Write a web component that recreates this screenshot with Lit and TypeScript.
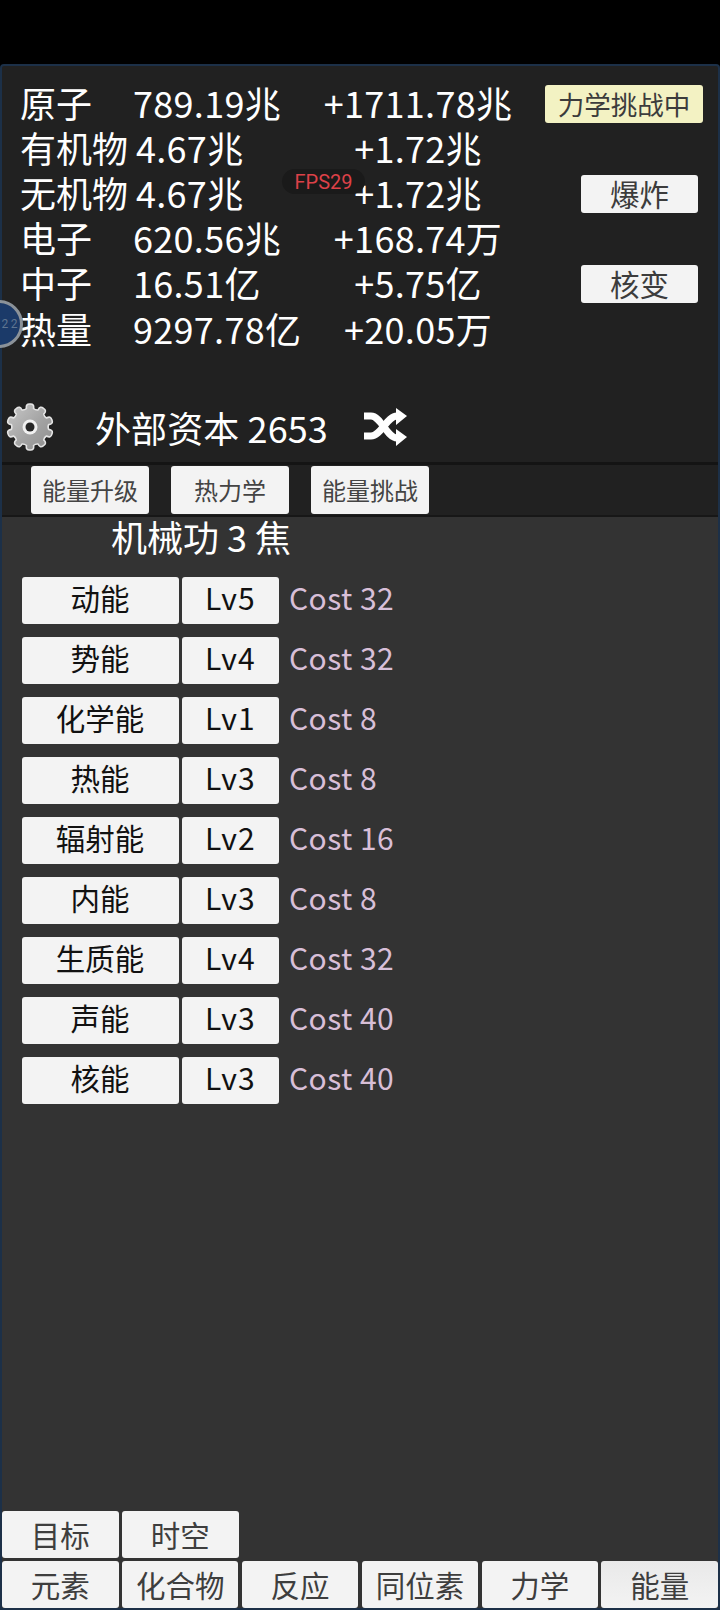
import { LitElement, html, css, svg } from "lit";
import { customElement } from "lit/decorators.js";

const rows = [
  { n: "原子", v: "789.19兆", g: "+1711.78兆", a: "力学挑战中", cls: "warn" },
  { n: "有机物", v: "4.67兆", g: "+1.72兆", wide: true },
  { n: "无机物", v: "4.67兆", g: "+1.72兆", a: "爆炸", cls: "", wide: true },
  { n: "电子", v: "620.56兆", g: "+168.74万" },
  { n: "中子", v: "16.51亿", g: "+5.75亿", a: "核变", cls: "" },
  { n: "热量", v: "9297.78亿", g: "+20.05万" },
];
const items = [
  ["动能", "Lv5", "Cost 32"],
  ["势能", "Lv4", "Cost 32"],
  ["化学能", "Lv1", "Cost 8"],
  ["热能", "Lv3", "Cost 8"],
  ["辐射能", "Lv2", "Cost 16"],
  ["内能", "Lv3", "Cost 8"],
  ["生质能", "Lv4", "Cost 32"],
  ["声能", "Lv3", "Cost 40"],
  ["核能", "Lv3", "Cost 40"],
];

function gearPath(): string {
  const teeth = 10;
  const cx = 24, cy = 24, ro = 23, ri = 18.8;
  const pt = (r: number, a: number) =>
    `${(cx + r * Math.cos(a)).toFixed(2)} ${(cy + r * Math.sin(a)).toFixed(2)}`;
  const step = (Math.PI * 2) / teeth;
  let d = "";
  for (let i = 0; i < teeth; i++) {
    const a = i * step - Math.PI / 2;
    const w = step * 0.3;
    d += `${i === 0 ? "M" : "L"}${pt(ri, a - w)} Q${pt(ro + 0.8, a - w)} ${pt(ro, a)} Q${pt(ro + 0.8, a + w)} ${pt(ri, a + w)} Q${pt(ri - 1.2, a + step / 2)} `;
    d += `${pt(ri, a + step - w)} `;
  }
  return d + "Z";
}

@customElement("app-root")
export class AppRoot extends LitElement {
  static styles = css`
    :host {
      display: block;
      width: 720px;
      height: 1610px;
      background: #000;
      font-family: "Noto Sans CJK SC", "Noto Sans", sans-serif;
      position: relative;
      overflow: hidden;
    }
    .screen {
      height: 1610px;
      box-sizing: border-box;
      padding-top: 64px;
      display: flex;
      flex-direction: column;
    }
    .panel {
      flex: 1;
      display: flex;
      flex-direction: column;
      min-height: 0;
      border: 2px solid #1c3048;
      border-radius: 4px 4px 0 0;
      background: #212121;
    }
    .stats {
      padding: 14px 15px 0 18px;
      color: #fff;
      height: 325px;
      box-sizing: border-box;
    }
    .stat {
      display: grid;
      grid-template-columns: 113px 166px 238px 1fr;
      height: 45.1px;
      align-items: center;
      font-size: 36px;
      line-height: 45px;
      white-space: nowrap;
    }
    .val, .gain { letter-spacing: 0.3px; }
    .val.wide { padding-left: 3px; }
    .gain { text-align: center; }
    .act { justify-self: end; margin: 2px 5px 0 0; }
    .act.warn { margin-right: 0; }
    .btn {
      display: flex;
      align-items: center;
      justify-content: center;
      box-sizing: border-box;
      background: #f3f3f3;
      border-radius: 3px;
      color: #3c3c3c;
      white-space: nowrap;
    }
    .act .btn {
      width: 117px;
      height: 38px;
      font-size: 29.5px;
    }
    .act.warn .btn {
      width: 158px;
      background: #f3f2c3;
      font-size: 26.5px;
    }
    .capital {
      height: 74px;
      display: flex;
      align-items: center;
      color: #fff;
      font-size: 36px;
      padding-left: 4px;
      padding-top: 1px;
      box-sizing: border-box;
      border-bottom: 3px solid #141414;
    }
    .gear { width: 48px; height: 48px; flex: none; }
    .capital span {
      margin-left: 41px;
      width: 268px;
      white-space: nowrap;
      letter-spacing: 0.1px;
    }
    .shuffle { width: 44px; height: 38px; flex: none; }
    .subtabs {
      display: flex;
      gap: 22px;
      padding: 1px 0 0 29px;
      height: 50px;
      box-sizing: border-box;
    }
    .subtabs .btn {
      width: 118px;
      height: 48px;
      padding-bottom: 2px;
      font-size: 24px;
      color: #444;
    }
    .main {
      flex: 1;
      display: flex;
      flex-direction: column;
      min-height: 0;
      background: #333;
      border-top: 2px solid #171717;
    }
    .title {
      color: #fff;
      font-size: 36px;
      line-height: 38px;
      padding-left: 109px;
      margin-bottom: 22px;
      white-space: nowrap;
    }
    .list {
      flex: 1;
      display: flex;
      flex-direction: column;
      gap: 13px;
      padding-left: 19.5px;
    }
    .item {
      display: flex;
      align-items: center;
      height: 47px;
    }
    .item .btn {
      height: 47px;
      padding-bottom: 7px;
      font-size: 29.5px;
      color: #111;
    }
    .item .name { width: 157px; }
    .item .lv {
      width: 97px;
      margin-left: 3.5px;
      font-size: 30px;
      letter-spacing: 1.2px;
    }
    .cost {
      color: #d8bfd8;
      font-size: 30px;
      letter-spacing: 0.45px;
      margin: 0 0 7px 10px;
      white-space: nowrap;
    }
    .nav {
      display: flex;
      flex-direction: column;
      gap: 3px;
    }
    .navrow { display: flex; gap: 3.33px; }
    .navrow .btn {
      width: 116.67px;
      height: 47px;
      padding-bottom: 2px;
      font-size: 29.5px;
      color: #3e3e3e;
    }
    .navrow .btn.on { background: linear-gradient(#e9e9e9, #f3f3f3); }
    .ball {
      position: absolute;
      left: -25px;
      top: 300px;
      width: 48px;
      height: 48px;
      box-sizing: border-box;
      border: 3px solid #8b9299;
      border-radius: 50%;
      background: #1b3a69;
      color: #5f7590;
      font-family: "Roboto", sans-serif;
      font-size: 12px;
      letter-spacing: 2.5px;
      display: flex;
      align-items: center;
      justify-content: flex-end;
    }
    .fps {
      position: absolute;
      left: 282px;
      top: 169px;
      width: 83px;
      height: 25px;
      border-radius: 13px;
      background: #1a1a1a;
      color: #dc4148;
      font-family: "Roboto", sans-serif;
      font-size: 20px;
      line-height: 26px;
      text-align: center;
    }
  `;

  render() {
    const gear = gearPath();
    return html`
      <div class="screen">
        <div class="panel">
          <div class="stats">
            ${rows.map(
              (r) => html`<div class="stat">
                <div>${r.n}</div>
                <div class="val ${r.wide ? "wide" : ""}">${r.v}</div>
                <div class="gain">${r.g}</div>
                ${r.a
                  ? html`<div class="act ${r.cls}"><div class="btn">${r.a}</div></div>`
                  : html`<div></div>`}
              </div>`
            )}
          </div>
          <div class="capital">
            <svg class="gear" viewBox="0 0 48 48">
              <defs>
                <linearGradient id="g" x1="0" y1="0" x2="1" y2="1">
                  <stop offset="0" stop-color="#c9c9c9" />
                  <stop offset="0.55" stop-color="#a3a3a3" />
                  <stop offset="1" stop-color="#8f8f8f" />
                </linearGradient>
              </defs>
              ${svg`<path d=${gear} fill="url(#g)" stroke="#e4e4e4" stroke-width="1.6" stroke-linejoin="round" />`}
              <circle cx="24" cy="24" r="7.5" fill="#f0f0f0" />
              <circle cx="24" cy="24" r="4.5" fill="#262626" />
            </svg>
            <span>外部资本 2653</span>
            <svg class="shuffle" viewBox="0 0 44 38" fill="none">
              <path d="M1 8h7c10 0 16 22 26 22" stroke="#fff" stroke-width="7" />
              <path d="M1 28h7c10 0 16-20 26-20" stroke="#fff" stroke-width="7" />
              <path d="M33 0l11 8-11 9zM33 21l11 8-11 9z" fill="#fff" />
            </svg>
          </div>
          <div class="subtabs">
            <div class="btn">能量升级</div>
            <div class="btn">热力学</div>
            <div class="btn">能量挑战</div>
          </div>
          <div class="main">
            <div class="title">机械功 3 焦</div>
            <div class="list">
              ${items.map(
                (i) => html`<div class="item">
                  <div class="btn name">${i[0]}</div>
                  <div class="btn lv">${i[1]}</div>
                  <div class="cost">${i[2]}</div>
                </div>`
              )}
            </div>
            <div class="nav">
              <div class="navrow">
                <div class="btn">目标</div>
                <div class="btn">时空</div>
              </div>
              <div class="navrow">
                <div class="btn">元素</div>
                <div class="btn">化合物</div>
                <div class="btn">反应</div>
                <div class="btn">同位素</div>
                <div class="btn">力学</div>
                <div class="btn on">能量</div>
              </div>
            </div>
          </div>
        </div>
      </div>
      <div class="fps">FPS29</div>
      <div class="ball">22</div>
    `;
  }
}
